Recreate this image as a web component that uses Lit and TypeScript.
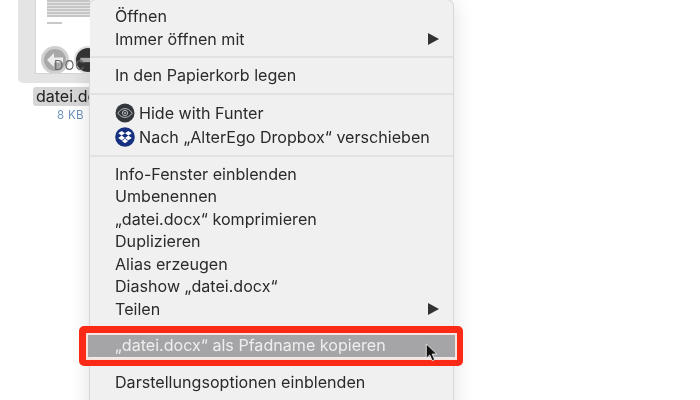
import { LitElement, html, css, nothing } from "lit";
import { customElement } from "lit/decorators.js";

type Row = { t: string; arrow?: boolean; icon?: "funter" | "dropbox"; hl?: boolean };
const groups: Row[][] = [
  [{ t: "Öffnen" }, { t: "Immer öffnen mit", arrow: true }],
  [{ t: "In den Papierkorb legen" }],
  [{ t: "Hide with Funter", icon: "funter" }, { t: "Nach „AlterEgo Dropbox“ verschieben", icon: "dropbox" }],
  [
    { t: "Info-Fenster einblenden" }, { t: "Umbenennen" }, { t: "„datei.docx“ komprimieren" }, { t: "Duplizieren" },
    { t: "Alias erzeugen" }, { t: "Diashow „datei.docx“" }, { t: "Teilen", arrow: true },
  ],
  [{ t: "„datei.docx“ als Pfadname kopieren", hl: true }],
  [{ t: "Darstellungsoptionen einblenden" }],
];

const funter = html`<svg class="ico" viewBox="0 0 20 20"><circle cx="10" cy="10" r="9.500" fill="#33373c"/><path d="M2.800 10.200C5 6.800 7.500 5.600 10 5.600s5 1.200 7.200 4.600C15 13.200 12.500 14.400 10 14.400s-5-1.200-7.200-4.200z" fill="none" stroke="#b4b7bb" stroke-width="1"/><circle cx="10" cy="10" r="2.600" fill="none" stroke="#b4b7bb" stroke-width="1"/><circle cx="10" cy="10" r="1" fill="#b4b7bb"/></svg>`;
const dropbox = html`<svg class="ico" viewBox="0 0 20 20"><circle cx="10" cy="10" r="9.800" fill="#14307f"/><path d="M6.700 4 10 6.300 6.700 8.600 3.200 6.300zM13.300 4 16.800 6.300 13.300 8.600 10 6.300zM6.700 8.600 10 10.900 6.700 13.200 3.200 10.900zM13.300 8.600 16.800 10.900 13.300 13.200 10 10.900zM6.800 14 10 11.800 13.200 14 10 16.200z" fill="#fff"/></svg>`;

@customElement("app-root")
export class AppRoot extends LitElement {
  static styles = css`
    :host { display: block; width: 700px; height: 400px; overflow: hidden; background: #fff; font-family: "Inter", "Liberation Sans", sans-serif; }
    .stage { position: relative; display: flex; width: 700px; height: 400px; overflow: hidden; filter: blur(0.4px); }
    .file { width: 90px; flex: none; overflow: hidden; display: flex; flex-direction: column; align-items: flex-start; }
    .tile { margin-left: 18px; width: 90px; height: 83px; flex: none; background: #e4e4e4; border-radius: 0 0 5px 5px; padding-left: 17px; box-sizing: border-box; }
    .page { width: 73px; height: 74px; background: #fff; border: 1px solid #d4d4d4; border-top: 0; box-sizing: border-box; position: relative; overflow: hidden; padding: 0 6px 0 11px; display: flex; flex-direction: column; gap: 5px; }
    .block { height: 17px; flex: none; background: repeating-linear-gradient(#c6c6c6 0 2px, #e6e6e6 2px 3px); }
    .short { height: 2px; width: 15px; background: #c8c8c8; flex: none; }
    .btn { position: absolute; top: 46px; width: 28px; height: 28px; border-radius: 50%; box-sizing: border-box; }
    .btn.a { left: 5px; background: #a8a8a8; border: 3px solid #d0d0d0; }
    .btn.b { left: 38px; background: #333; border: 2px solid #ddd; }
    .btn svg { display: block; width: 100%; height: 100%; }
    .doc { font-size: 13px; color: #666; position: absolute; left: 18px; top: 57px; letter-spacing: 1px; }
    .name { margin: 4px 0 0 33px; height: 19px; width: 70px; padding-left: 3px; background: #d6d6d6; border-radius: 3px; font-size: 16px; line-height: 19px; color: #222; white-space: nowrap; flex: none; }
    .size { margin: 2px 0 0 57px; font-size: 11.5px; line-height: 14px; color: #6c93bd; letter-spacing: .3px; white-space: nowrap; }
    .menu { width: 363px; flex: none; height: 412px; background: #f0f0f0; border-radius: 6px; box-shadow: 0 0 0 1px #d8d8d8, 0 2px 22px rgba(0,0,0,.14); padding-top: 5px; box-sizing: border-box; display: flex; flex-direction: column; }
    .group { display: flex; flex-direction: column; padding-bottom: 6px; }
    .group + .group { border-top: 2px solid #e2e2e2; padding-top: 6px; }
    .row { height: 22.5px; display: flex; align-items: center; padding: 0 14px 0 25px; font-size: 16.1px; color: #2a2a2c; white-space: nowrap; gap: 4px; }
    .row.tall { height: 24px; }
    .row.hl { background: #a5a5a8; color: #eee; margin-left: -2px; margin-right: -2px; padding-left: 27px; }
    .ico { width: 20px; height: 20px; flex: none; }
    .label { flex: 1; }
    .arrow { width: 0; height: 0; border-style: solid; border-width: 6px 0 6px 11px; border-color: transparent transparent transparent #333; }
    .frame { position: absolute; left: 79px; top: 326px; width: 384px; height: 40px; box-sizing: border-box; border: solid #fb2a17; border-width: 7px 6px 6px 7px; border-radius: 5px; box-shadow: inset 0 0 0 2px #f5e4df; }
    .cursor { position: absolute; left: 425px; top: 343px; width: 14px; height: 19px; }
  `;

  render() {
    return html`<div class="stage">
      <div class="file">
        <div class="tile"><div class="page">
          <div class="block"></div><div class="short"></div>
          <span class="btn a"><svg viewBox="0 0 22 22"><path d="M3 11l7-7v4.500h9v5h-9v4.500z" fill="#ececec"/></svg></span>
          <span class="btn b"><svg viewBox="0 0 22 22"><path d="M4 9h14v4H4z" fill="#aaa"/></svg></span>
          <span class="doc">DOC</span>
        </div></div>
        <div class="name">datei.docx</div>
        <div class="size">8 KB</div>
      </div>
      <div class="menu">
        ${groups.map((g) => html`<div class="group">
          ${g.map((r) => html`<div class="row ${r.icon ? "tall" : ""} ${r.hl ? "hl" : ""}">
            ${r.icon === "funter" ? funter : r.icon === "dropbox" ? dropbox : nothing}
            <span class="label">${r.t}</span>
            ${r.arrow ? html`<span class="arrow"></span>` : nothing}
          </div>`)}
        </div>`)}
      </div>
      <div class="frame"></div>
      <svg class="cursor" viewBox="0 0 14 20"><path d="M1 1v15l3.600-3.400 2.600 6 2.600-1.100-2.600-5.900H12z" fill="#111" stroke="#fff" stroke-width=".8"/></svg>
    </div>`;
  }
}
